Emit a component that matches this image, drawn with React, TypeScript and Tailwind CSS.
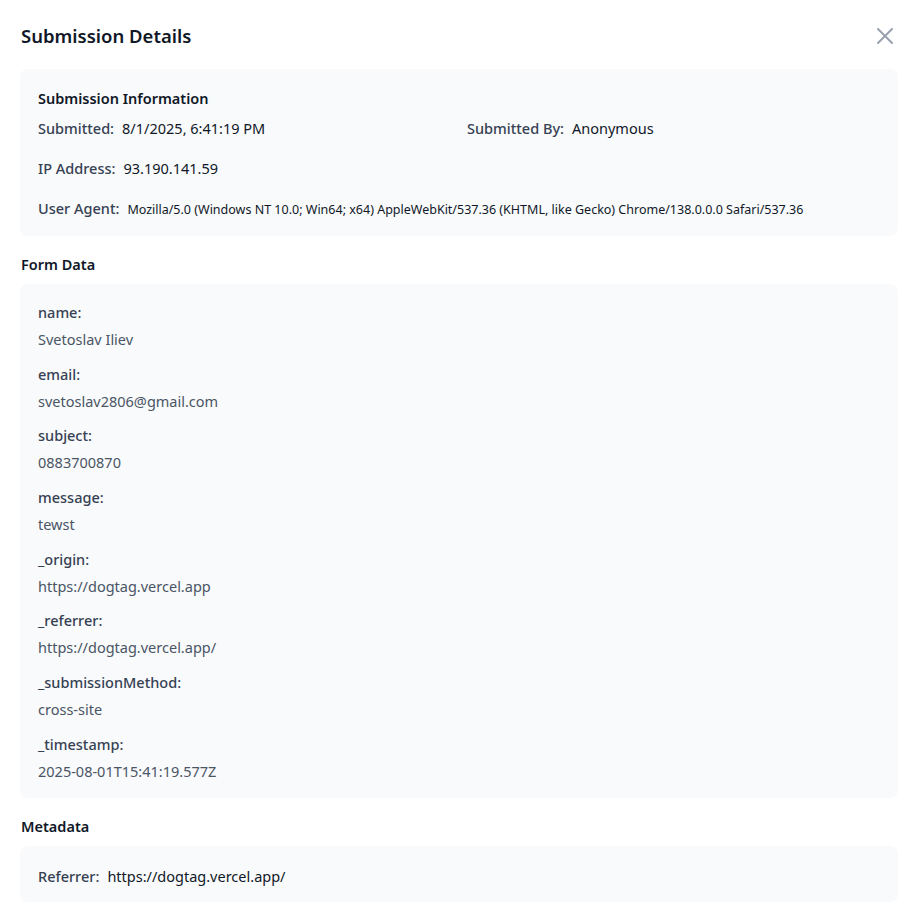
import React from 'react';

const formData: { key: string; value: string }[] = [
  { key: 'name', value: 'Svetoslav Iliev' },
  { key: 'email', value: 'svetoslav2806@gmail.com' },
  { key: 'subject', value: '0883700870' },
  { key: 'message', value: 'tewst' },
  { key: '_origin', value: 'https://dogtag.vercel.app' },
  { key: '_referrer', value: 'https://dogtag.vercel.app/' },
  { key: '_submissionMethod', value: 'cross-site' },
  { key: '_timestamp', value: '2025-08-01T15:41:19.577Z' },
];

export default function App() {
  return (
    <div className="min-h-screen bg-white pl-5 pr-[19px] pt-[22px] pb-3 font-['Noto_Sans',sans-serif] text-gray-900">
      {/* Header */}
      <div className="flex items-center justify-between mb-[19px]">
        <h2 className="pl-px text-[18.5px] leading-7 font-semibold text-gray-900">Submission Details</h2>
        <button className="mr-1 text-gray-400 hover:text-gray-600">
          <svg width="18" height="18" viewBox="0 0 18 18" fill="none" stroke="currentColor" strokeWidth="2" strokeLinecap="round">
            <path d="M2 2 16 16M16 2 2 16" />
          </svg>
        </button>
      </div>

      <div className="space-y-4">
        {/* Submission info */}
        <div className="bg-gray-50 rounded-lg px-[18px] pt-[17px] pb-[14px]">
          <h3 className="text-[14.5px] leading-6 font-semibold text-gray-900 mb-1.5">Submission Information</h3>
          <div className="grid grid-cols-2 gap-4 text-[14.5px] leading-6">
            <div>
              <span className="font-medium text-gray-700">Submitted:</span>
              <span className="ml-2 text-gray-900">8/1/2025, 6:41:19 PM</span>
            </div>
            <div>
              <span className="font-medium text-gray-700">Submitted By:</span>
              <span className="ml-2 text-gray-900">Anonymous</span>
            </div>
            <div className="col-span-2">
              <span className="font-medium text-gray-700">IP Address:</span>
              <span className="ml-2 text-gray-900">93.190.141.59</span>
            </div>
            <div className="col-span-2">
              <span className="font-medium text-gray-700">User Agent:</span>
              <span className="ml-2 text-[12.5px] text-gray-900">
                Mozilla/5.0 (Windows NT 10.0; Win64; x64) AppleWebKit/537.36 (KHTML, like Gecko) Chrome/138.0.0.0 Safari/537.36
              </span>
            </div>
          </div>
        </div>

        {/* Form data */}
        <div>
          <h3 className="pl-px text-[14.5px] leading-6 font-semibold text-gray-900 mb-2">Form Data</h3>
          <div className="bg-gray-50 rounded-lg px-[18px] pt-4 pb-[15px] space-y-[10.7px]">
            {formData.map((item) => (
              <div key={item.key}>
                <div className="text-[14.5px] leading-6 font-medium text-gray-700">{item.key}:</div>
                <div className="mt-[3px] text-[14.5px] leading-6 text-gray-600">{item.value}</div>
              </div>
            ))}
          </div>
        </div>

        {/* Metadata */}
        <div>
          <h3 className="pl-px text-[14.5px] leading-6 font-semibold text-gray-900 mb-2">Metadata</h3>
          <div className="bg-gray-50 rounded-lg px-[18px] pt-[18px] pb-[14px] text-[14.5px] leading-6">
            <span className="font-medium text-gray-700">Referrer:</span>
            <span className="ml-2 text-gray-900">https://dogtag.vercel.app/</span>
          </div>
        </div>
      </div>
    </div>
  );
}
